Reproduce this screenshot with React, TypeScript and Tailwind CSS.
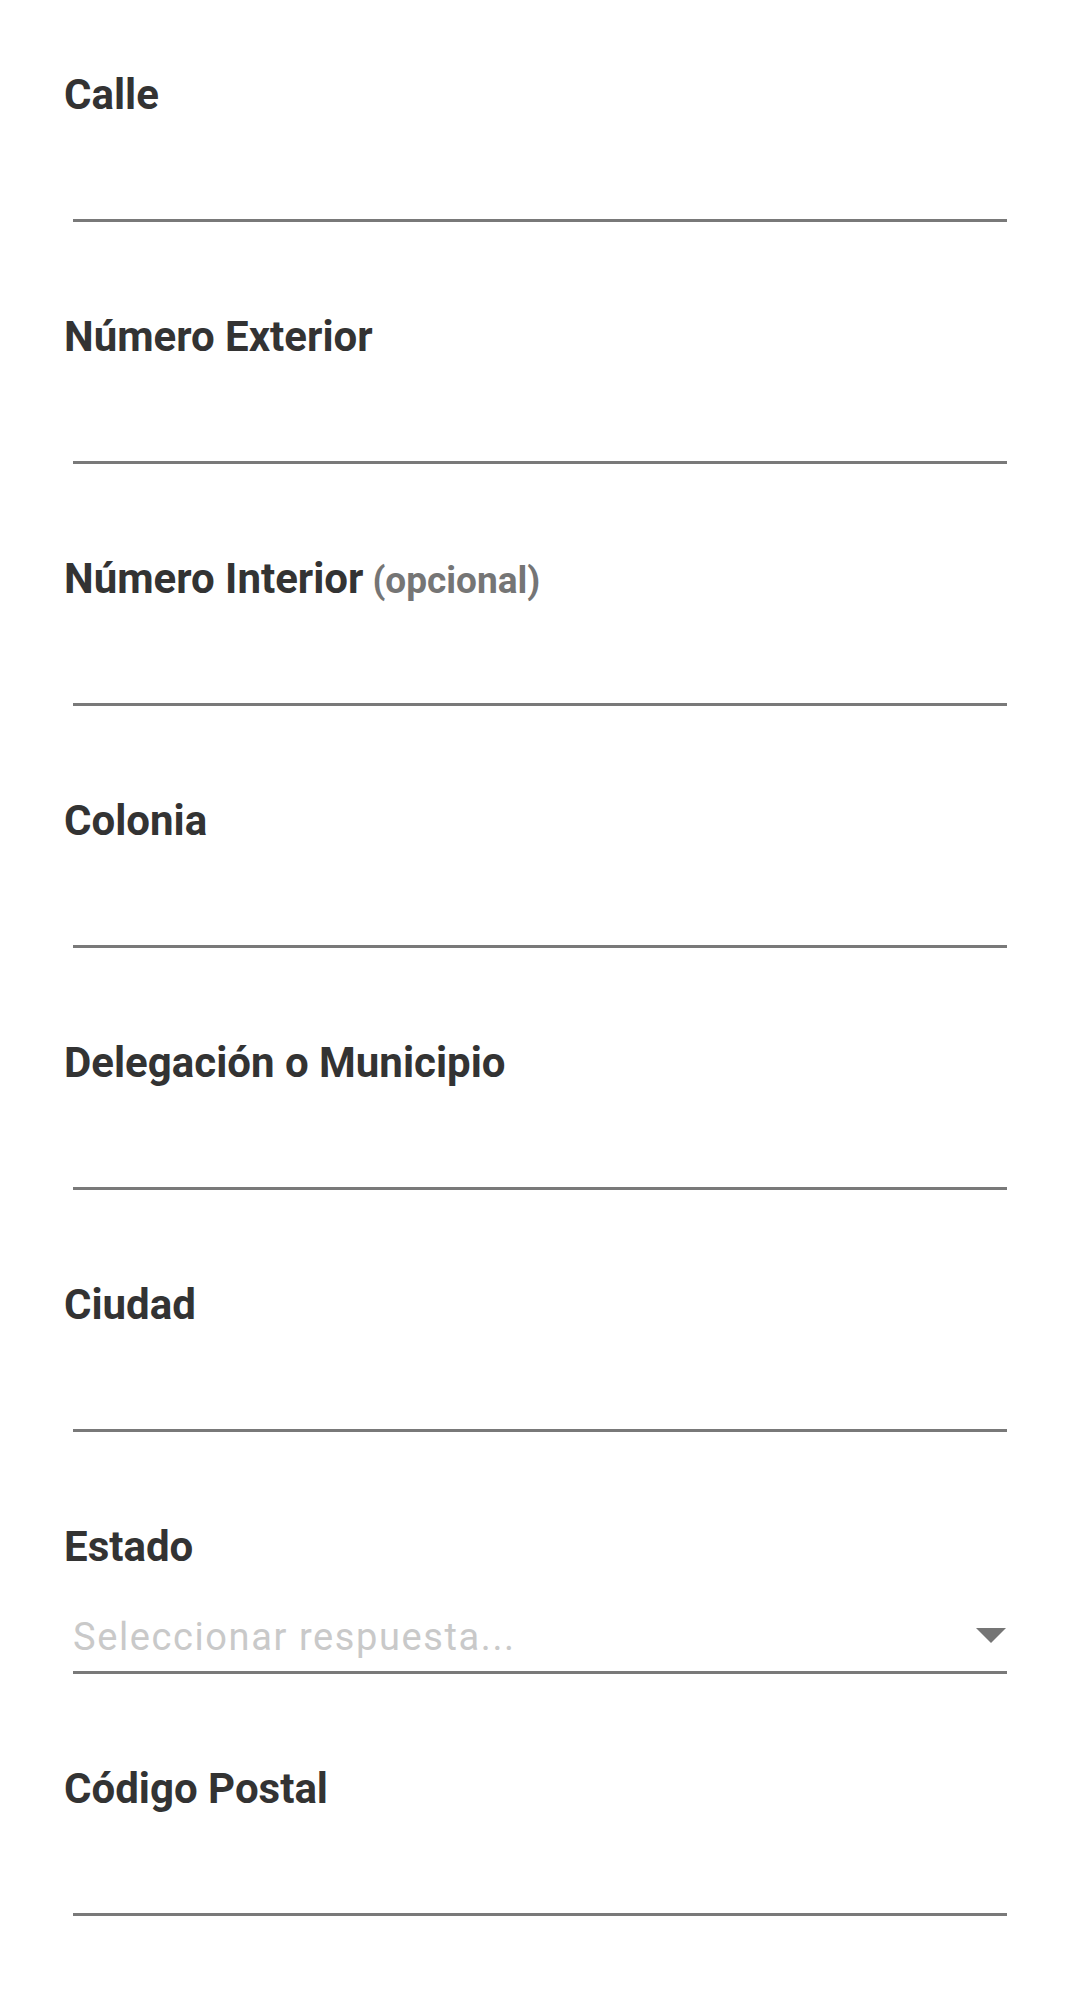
import React from 'react';

type Field = {
  label: string;
  optional?: boolean;
  select?: boolean;
};

const FIELDS: Field[] = [
  { label: 'Calle' },
  { label: 'Número Exterior' },
  { label: 'Número Interior', optional: true },
  { label: 'Colonia' },
  { label: 'Delegación o Municipio' },
  { label: 'Ciudad' },
  { label: 'Estado', select: true },
  { label: 'Código Postal' },
];

function FormField({ field }: { field: Field }) {
  return (
    <div className="flex flex-col">
      <label className="h-[50px] text-[42px] leading-[50px] font-bold text-[#333333] whitespace-nowrap">
        {field.label}
        {field.optional && (
          <span className="ml-[9px] text-[37px] font-bold text-[#757575]">(opcional)</span>
        )}
      </label>
      <div className="mx-[9px] h-[102px] border-b-[3px] border-[#797979] flex items-end justify-between">
        {field.select ? (
          <>
            <span className="mb-[12px] text-[38px] leading-[44px] tracking-[1.6px] text-[#c9c9c9] whitespace-nowrap">
              Seleccionar respuesta...
            </span>
            <svg
              width="30"
              height="15"
              viewBox="0 0 30 15"
              className="mb-[28px] mr-[1px]"
            >
              <polygon points="0,0 30,0 15,15" fill="#757575" />
            </svg>
          </>
        ) : null}
      </div>
    </div>
  );
}

export default function App() {
  return (
    <div className="min-h-[1999px] w-full bg-white font-['Roboto','Liberation_Sans',sans-serif]">
      <form className="flex flex-col gap-[90px] px-[64px] pt-[70px]">
        {FIELDS.map((f) => (
          <FormField key={f.label} field={f} />
        ))}
      </form>
    </div>
  );
}
